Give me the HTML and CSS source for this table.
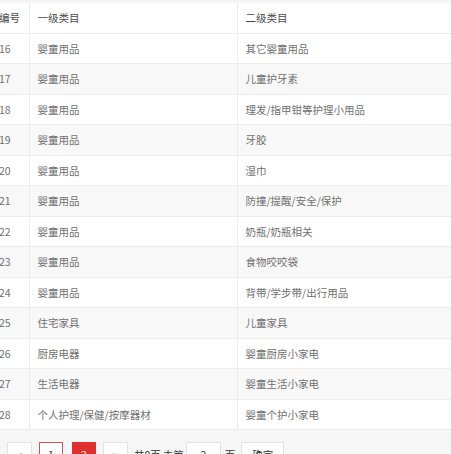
FILE: index.html
```html
<!DOCTYPE html>
<html lang="zh-CN">
<head>
<meta charset="utf-8">
<title>类目列表</title>
<link rel="stylesheet" href="styles.css">
</head>
<body>
<div class="wrap">
  <table class="grid">
    <thead>
      <tr><th class="c1">编号</th><th class="c2">一级类目</th><th class="c3">二级类目</th></tr>
    </thead>
    <tbody>
      <tr><td>16</td><td>婴童用品</td><td>其它婴童用品</td></tr>
      <tr><td>17</td><td>婴童用品</td><td>儿童护牙素</td></tr>
      <tr><td>18</td><td>婴童用品</td><td>理发/指甲钳等护理小用品</td></tr>
      <tr><td>19</td><td>婴童用品</td><td>牙胶</td></tr>
      <tr><td>20</td><td>婴童用品</td><td>湿巾</td></tr>
      <tr><td>21</td><td>婴童用品</td><td>防撞/提醒/安全/保护</td></tr>
      <tr><td>22</td><td>婴童用品</td><td>奶瓶/奶瓶相关</td></tr>
      <tr><td>23</td><td>婴童用品</td><td>食物咬咬袋</td></tr>
      <tr><td>24</td><td>婴童用品</td><td>背带/学步带/出行用品</td></tr>
      <tr><td>25</td><td>住宅家具</td><td>儿童家具</td></tr>
      <tr><td>26</td><td>厨房电器</td><td>婴童厨房小家电</td></tr>
      <tr><td>27</td><td>生活电器</td><td>婴童生活小家电</td></tr>
      <tr><td>28</td><td>个人护理/保健/按摩器材</td><td>婴童个护小家电</td></tr>
    </tbody>
  </table>
</div>
<div class="pager">
  <a class="pg pg-arrow">&lt;</a>
  <a class="pg pg-hover">1</a>
  <a class="pg pg-cur">2</a>
  <a class="pg pg-arrow pg-next">&gt;</a>
  <span class="pg-text">共0页</span>
  <span class="pg-text">去第</span>
  <input class="pg-input" type="text" value="2">
  <span class="pg-text">页</span>
  <button class="pg-btn">确定</button>
</div>
</body>
</html>
```

FILE: styles.css
```css
html, body {
  margin: 0;
  padding: 0;
  background: #f6f6f6;
  font-family: "Noto Sans CJK SC", "Noto Sans", sans-serif;
  font-size: 10.5px;
  color: #707070;
  overflow: hidden;
}

.wrap {
  margin-top: 3px;
  overflow: hidden;
  width: 451px;
  background: #fff;
}

.grid {
  border-collapse: collapse;
  table-layout: fixed;
  width: 480px;
  margin-left: -9px;
  background: #fff;
}

.grid th,
.grid td {
  height: 30.5px;
  padding: 0 8px;
  text-align: left;
  font-weight: normal;
  border-bottom: 1px solid #ececec;
  border-right: 1px solid #ececec;
  white-space: nowrap;
  box-sizing: border-box;
}

.grid th {
  height: 30px;
  color: #4a4a4a;
}

.grid .c1 { width: 38px; }
.grid .c2 { width: 208px; }
.grid .c3 { width: auto; }

.grid tbody tr:nth-child(even) td {
  background: #f8f8f8;
}

.pager {
  display: flex;
  align-items: center;
  margin-top: 12px;
  padding-left: 7px;
  height: 24px;
  color: #333;
}

.pg {
  display: flex;
  align-items: center;
  justify-content: center;
  box-sizing: border-box;
  width: 25px;
  height: 24px;
  border: 1px solid #e2e2e2;
  background: #fff;
  color: #333;
  margin-right: 7px;
}

.pg-arrow {
  color: #aaa;
}

.pg-hover {
  width: 24px;
  border-color: #d9534f;
  margin-right: 9px;
}

.pg-cur {
  width: 24px;
  border-color: #e02f2f;
  background: #e02f2f;
  color: #fff;
  margin-right: 7px;
}

.pg-next {
  margin-right: 6px;
}

.pg-text {
  margin: 0 2px 0 0;
  color: #333;
}

.pg-input {
  box-sizing: border-box;
  width: 35px;
  height: 24px;
  border: 1px solid #e2e2e2;
  background: #fff;
  text-align: center;
  font: inherit;
  color: #333;
  margin: 0 4px 0 0;
  padding: 0;
}

.pg-btn {
  box-sizing: border-box;
  height: 24px;
  width: 43px;
  margin-left: 4px;
  border: 1px solid #e2e2e2;
  background: #fff;
  font: inherit;
  color: #333;
  padding: 0;
}
```
